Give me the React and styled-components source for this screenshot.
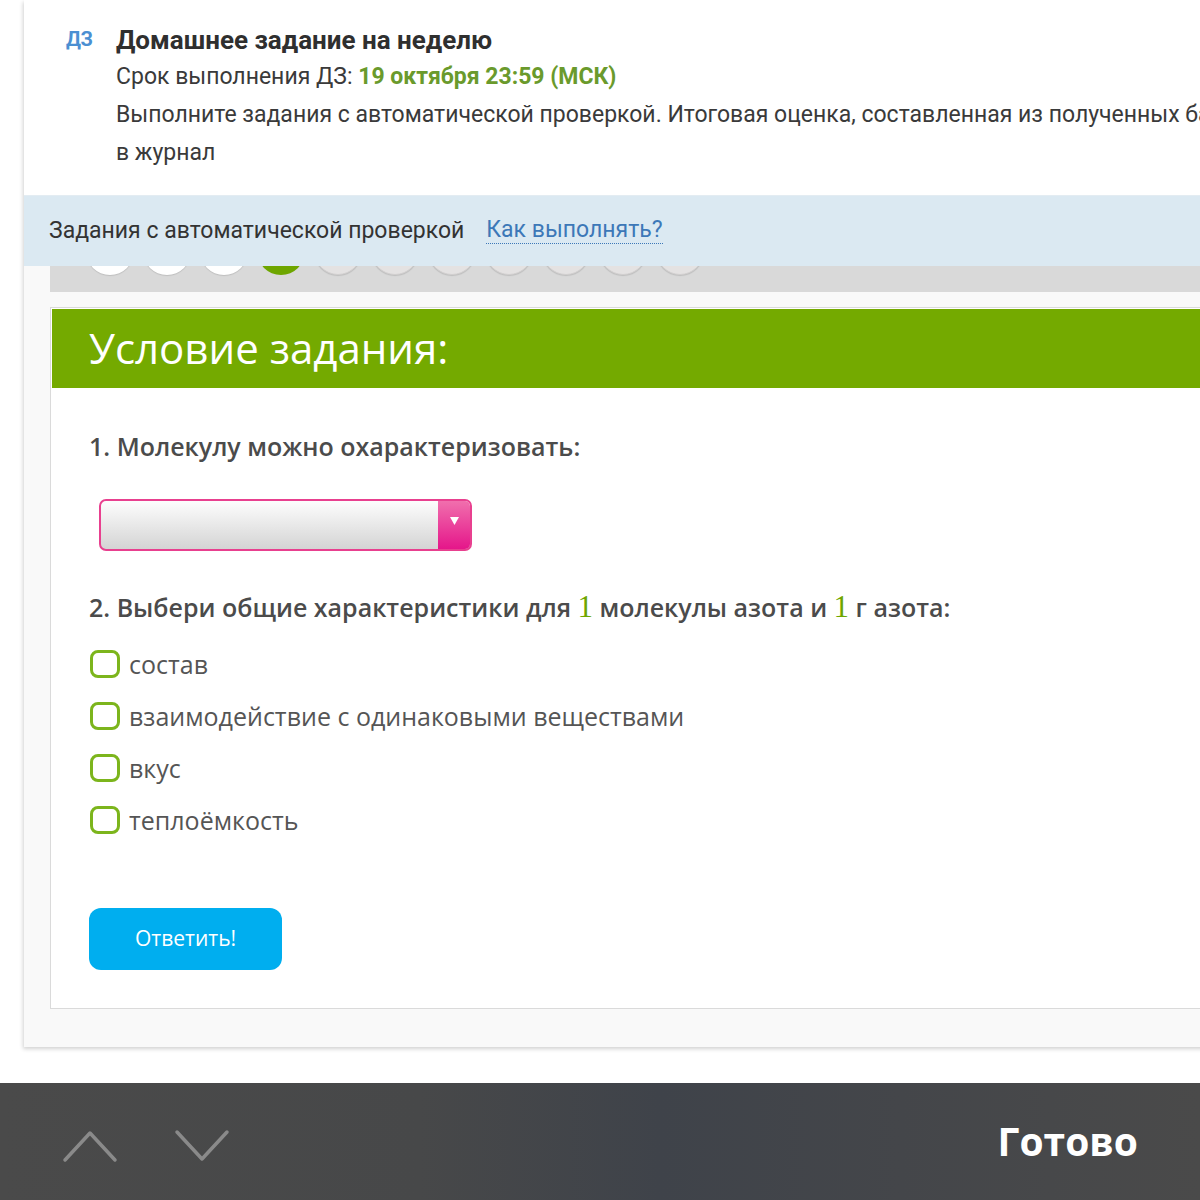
import React from "react";
import styled, { createGlobalStyle } from "styled-components";

const GlobalStyle = createGlobalStyle`
  html, body { margin: 0; padding: 0; background: #ffffff; overflow: hidden; }
  body { width: 1200px; height: 1200px; font-family: "Open Sans", sans-serif; }
  * { box-sizing: border-box; }
`;

const Page = styled.div`
  width: 1200px;
  height: 1200px;
  display: flex;
  flex-direction: column;
  overflow: hidden;
`;

const Card = styled.div`
  margin-left: 24px;
  width: 1320px;
  flex: none;
  background: #f9f9f9;
  box-shadow: -1px 2px 4px rgba(0, 0, 0, 0.18);
  padding-bottom: 38px;
`;

const Header = styled.div`
  background: #ffffff;
  display: flex;
  padding: 22px 0 23px 42px;
  border-bottom: 1px solid #e3ecf2;
  font-family: "Roboto", "Noto Sans", sans-serif;
`;

const HwIcon = styled.div`
  width: 50px;
  flex: none;
  color: #4b8fd2;
  font-weight: 700;
  font-size: 20px;
  line-height: 34px;
  letter-spacing: -0.5px;
`;

const HeaderText = styled.div`
  display: flex;
  flex-direction: column;
  color: #333333;
`;

const Title = styled.div`
  font-size: 26px;
  font-weight: 700;
  line-height: 36px;
  color: #2f2f2f;
`;

const Line = styled.div`
  font-size: 23px;
  line-height: 38px;
  color: #3a3a3a;
  white-space: nowrap;
`;

const Deadline = styled.span`
  color: #6a9a2c;
  font-weight: 700;
`;

const InfoBar = styled.div`
  position: relative;
  z-index: 2;
  height: 70px;
  background: #dbe9f2;
  display: flex;
  align-items: center;
  gap: 22px;
  padding: 0 0 2px 25px;
  font-family: "Roboto", "Noto Sans", sans-serif;
  font-size: 23px;
  color: #333333;
`;

const HowLink = styled.span`
  color: #3d78b8;
  border-bottom: 1px dotted #3d78b8;
  line-height: 26px;
`;

const Content = styled.div`
  margin-left: 26px;
`;

const Steps = styled.div`
  position: relative;
  z-index: 1;
  margin-top: -40px;
  background: #d9d9d9;
  display: flex;
  gap: 9px;
  padding: 1px 0 17px 36px;
  margin-bottom: 15px;
`;

const Step = styled.div`
  width: 48px;
  height: 48px;
  border-radius: 50%;
  flex: none;
  background: ${(p) =>
    p.$state === "done" ? "#ffffff" : p.$state === "current" ? "#6ea600" : "#e4e2e2"};
  box-shadow: ${(p) =>
    p.$state === "current" ? "none" : "0 1px 1px rgba(0,0,0,0.12)"};
  border: 1px solid ${(p) => (p.$state === "pending" ? "#d2d0d0" : "transparent")};
`;

const Panel = styled.div`
  background: #ffffff;
  border: 1px solid #dadada;
  padding: 1px 0 38px 1px;
`;

const PanelHead = styled.div`
  background: #74aa00;
  height: 79px;
  display: flex;
  align-items: center;
  padding: 0 0 3px 37px;
  color: #ffffff;
  font-family: "Open Sans", sans-serif;
  font-size: 42px;
  font-weight: 400;
`;

const PanelBody = styled.div`
  padding: 42px 0 0 37px;
  display: flex;
  flex-direction: column;
`;

const Question = styled.div`
  font-size: 25px;
  font-weight: 600;
  line-height: 32px;
  color: #4b4b4b;
`;

const Num = styled.span`
  font-family: "Liberation Serif", serif;
  font-weight: 400;
  font-size: 31px;
  line-height: 0;
  color: #6ea600;
`;

const Select = styled.div`
  margin: 37px 0 40px 10px;
  width: 373px;
  height: 52px;
  border: 2px solid #e8408f;
  border-radius: 7px;
  display: flex;
  overflow: hidden;
  background: linear-gradient(#fdfdfd, #d4d4d4);
`;

const SelectField = styled.div`
  flex: 1;
`;

const SelectButton = styled.div`
  width: 32px;
  background: linear-gradient(#f06fad, #e5168a);
  display: flex;
  justify-content: center;
  padding-top: 16px;
`;

const Options = styled.div`
  margin-top: 15px;
  display: flex;
  flex-direction: column;
`;

const Option = styled.label`
  height: 52px;
  display: flex;
  align-items: center;
  gap: 9px;
  font-size: 25px;
  color: #555555;
`;

const Box = styled.span`
  width: 30px;
  height: 28px;
  border: 3px solid #7cb51c;
  border-radius: 8px;
  flex: none;
  margin-left: 1px;
`;

const Submit = styled.button`
  margin-top: 62px;
  width: 193px;
  height: 62px;
  border: none;
  border-radius: 12px;
  background: #00aeef;
  color: #ffffff;
  font-family: "Open Sans", sans-serif;
  font-size: 21px;
  padding: 0 0 2px 0;
`;

const KeyBar = styled.div`
  margin-top: auto;
  height: 117px;
  flex: none;
  background: linear-gradient(
    90deg,
    #4a4a4a 0%,
    #474849 35%,
    #3f434a 55%,
    #44464a 75%,
    #4a4a4a 100%
  );
  display: flex;
  align-items: center;
  padding: 0 62px 0 62px;
`;

const Arrows = styled.div`
  display: flex;
  gap: 56px;
  align-items: center;
  margin-top: 8px;
`;

const Done = styled.div`
  margin-left: auto;
  color: #ffffff;
  font-family: "Open Sans", sans-serif;
  font-weight: 700;
  font-size: 39px;
  padding-bottom: 2px;
`;

const steps = [
  "done", "done", "done", "current", "pending", "pending",
  "pending", "pending", "pending", "pending", "pending",
];

const options = [
  "состав",
  "взаимодействие с одинаковыми веществами",
  "вкус",
  "теплоёмкость",
];

export default function App() {
  return (
    <Page>
      <GlobalStyle />
      <Card>
        <Header>
          <HwIcon>ДЗ</HwIcon>
          <HeaderText>
            <Title>Домашнее задание на неделю</Title>
            <Line>
              Срок выполнения ДЗ: <Deadline>19 октября 23:59 (МСК)</Deadline>
            </Line>
            <Line>
              Выполните задания с автоматической проверкой. Итоговая оценка, составленная из полученных баллов, будет выставлена
            </Line>
            <Line>в журнал</Line>
          </HeaderText>
        </Header>
        <InfoBar>
          <span>Задания с автоматической проверкой</span>
          <HowLink>Как выполнять?</HowLink>
        </InfoBar>
        <Content>
          <Steps>
            {steps.map((s, i) => (
              <Step key={i} $state={s} />
            ))}
          </Steps>
          <Panel>
            <PanelHead>Условие задания:</PanelHead>
            <PanelBody>
              <Question>1. Молекулу можно охарактеризовать:</Question>
              <Select>
                <SelectField />
                <SelectButton>
                  <svg width="9" height="8" viewBox="0 0 9 8">
                    <path d="M0 0 H9 L4.5 8 Z" fill="#ffffff" />
                  </svg>
                </SelectButton>
              </Select>
              <Question>
                2. Выбери общие характеристики для <Num>1</Num> молекулы азота и <Num>1</Num> г азота:
              </Question>
              <Options>
                {options.map((o) => (
                  <Option key={o}>
                    <Box />
                    {o}
                  </Option>
                ))}
              </Options>
              <div>
                <Submit>Ответить!</Submit>
              </div>
            </PanelBody>
          </Panel>
        </Content>
      </Card>
      <KeyBar>
        <Arrows>
          <svg width="56" height="34" viewBox="0 0 56 34">
            <path d="M3 31 L28 4 L53 31" fill="none" stroke="#8a8a8a" strokeWidth="3.5" strokeLinecap="round" strokeLinejoin="round" />
          </svg>
          <svg width="56" height="34" viewBox="0 0 56 34">
            <path d="M3 3 L28 30 L53 3" fill="none" stroke="#8a8a8a" strokeWidth="3.5" strokeLinecap="round" strokeLinejoin="round" />
          </svg>
        </Arrows>
        <Done>Готово</Done>
      </KeyBar>
    </Page>
  );
}
